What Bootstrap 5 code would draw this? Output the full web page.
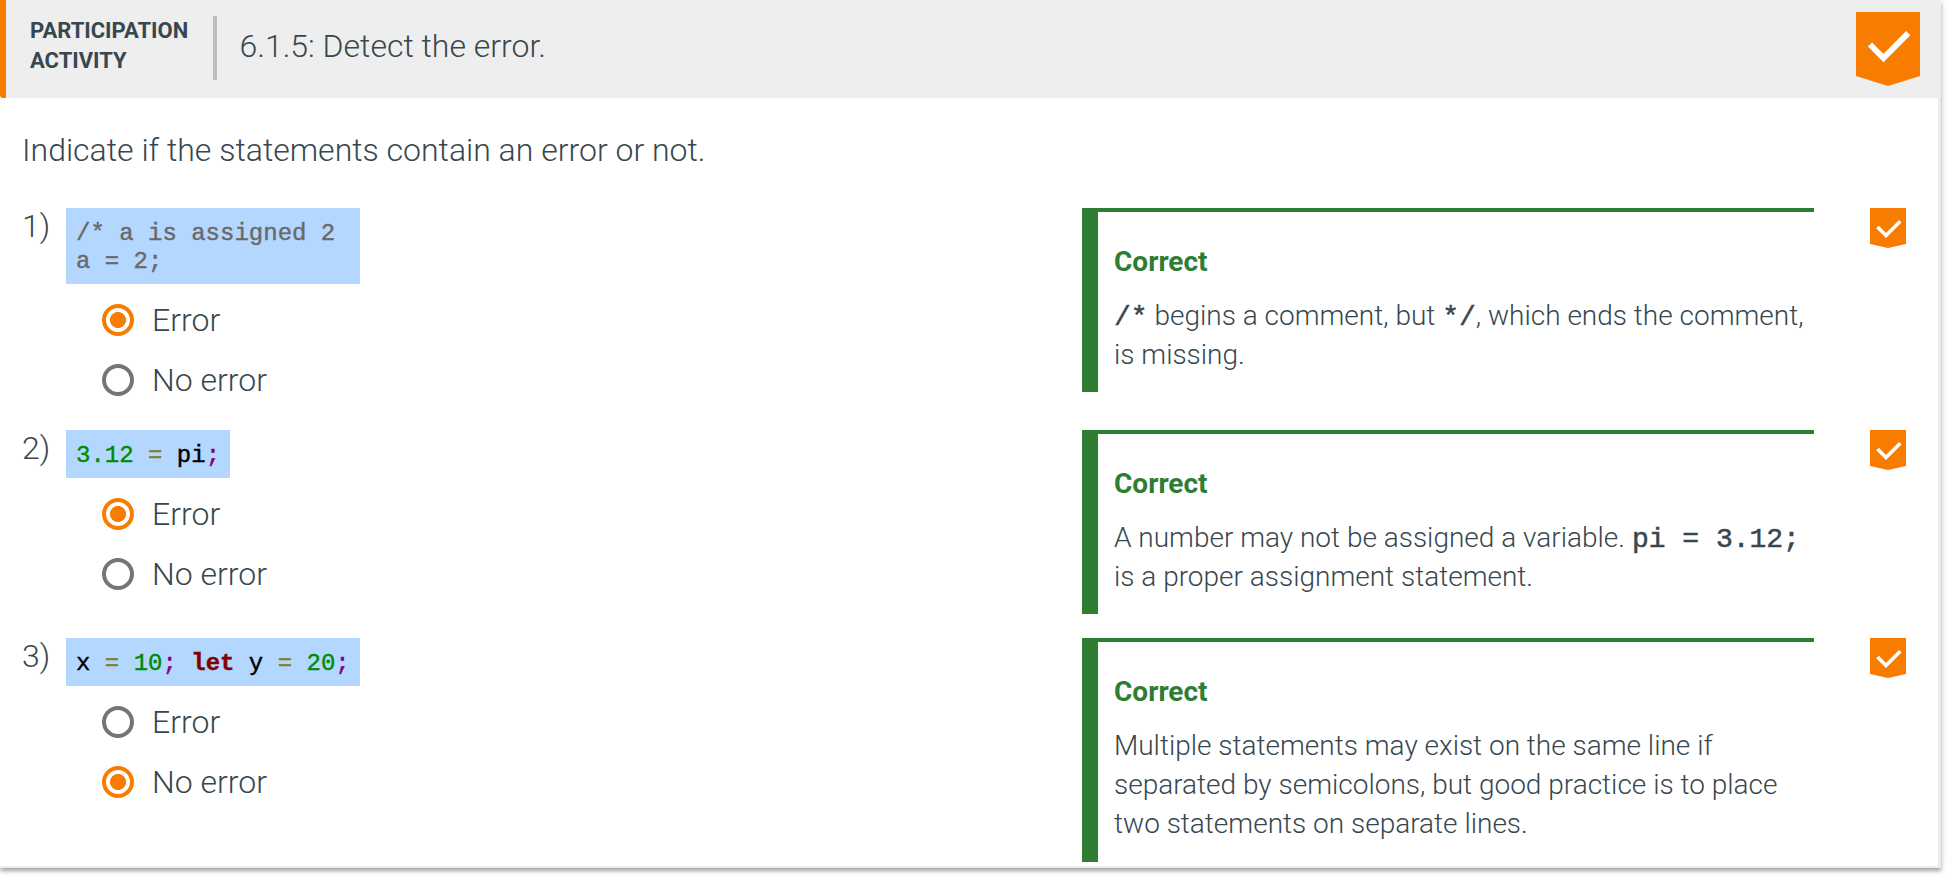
<!DOCTYPE html>
<html lang="en">
<head>
<meta charset="utf-8">
<meta name="viewport" content="width=device-width, initial-scale=1">
<title>6.1.5: Detect the error.</title>
<link href="https://cdn.jsdelivr.net/npm/bootstrap@5.3.0/dist/css/bootstrap.min.css" rel="stylesheet">
<style>
  body { font-family: Roboto, sans-serif; font-size: 32px; font-weight: 300; line-height: 44px; color: #37474f; background: #fff; height: 876px; overflow: hidden; }
  .activity { width: 1941px; height: 868px; border: solid #ececec; border-width: 0 3px 2px 0; box-shadow: 0 3px 4px rgba(0,0,0,.32), 0 1px 10px rgba(0,0,0,.08); }
  .activity-head { height: 98px; margin-right: -3px; background: #eee; border-left: 6px solid #f77c00; border-bottom-left-radius: 3px; padding: 12px 21px 0 24px; }
  .kind { width: 187px; height: 64px; margin-top: 4px; border-right: 4px solid #bdbdbd; font-size: 22px; font-weight: 700; line-height: 30px; }
  .activity-title { margin: 12px 0 0 22.5px; font-size: 32px; font-weight: 300; line-height: 44px; }
  .intro { margin: 30px 22px 36px; }
  .question { padding-left: 22px; }
  .num { width: 44px; flex: none; line-height: 36px; }
  .left-side { width: 1016px; flex: none; padding-bottom: 20px; }
  .snippet { font-family: "Liberation Mono", monospace; font-size: 24px; font-weight: 400; line-height: 28px; width: fit-content; padding: 12px 10px 8px; margin: 0 0 6px; background: #b3d7ff; color: #000; overflow: visible; -webkit-text-stroke: .4px currentColor; }
  .snippet-wide { width: 294px; }
  .cm { color: #696969; } .nm { color: #008b00; } .op { color: #808030; } .pn { color: #800080; } .kw { color: #800000; font-weight: 700; }
  .option { height: 60px; padding-left: 36px; gap: 18px; }
  .option .form-check-input { width: 32px; height: 32px; margin: 0; border: 4px solid #757575; background: #fff; flex: none; }
  .option .form-check-input:checked { border-color: #f77c00; background: radial-gradient(circle, #f77c00 7.6px, #fff 8.4px); background-origin: border-box; }
  .explain { width: 732px; flex: none; min-height: 184px; margin-bottom: 24px; border: solid #2e7d32; border-width: 4px 0 0 16px; padding: 30px 0 17px 16px; font-size: 28px; line-height: 39.2px; }
  .verdict { color: #2e7d32; font-weight: 700; margin-bottom: 14.8px; }
  .explain code { font-family: "Liberation Mono", monospace; font-size: 28px; line-height: 1; color: inherit; -webkit-text-stroke: .5px currentColor; }
  .mini { margin-left: 56px; flex: none; }
  .question:last-child .explain { margin-bottom: 0; height: 224px; padding-bottom: 0; }
</style>
</head>
<body>
<main class="activity">
  <header class="activity-head d-flex align-items-start">
    <div class="kind">PARTICIPATION<br>ACTIVITY</div>
    <h1 class="activity-title">6.1.5: Detect the error.</h1>
    <svg class="ms-auto" width="64" height="74" viewBox="0 0 64 74"><path fill="#f77c00" d="M0 0H64V64L32 74L0 64Z"/><path fill="none" stroke="#fff" stroke-width="6" d="M14 32.5L27.5 46L52.2 21.2"/></svg>
  </header>
  <p class="intro">Indicate if the statements contain an error or not.</p>

  <section class="question d-flex align-items-start">
    <div class="num">1)</div>
    <div class="left-side">
      <pre class="snippet snippet-wide cm">/* a is assigned 2
a = 2;</pre>
      <label class="option d-flex align-items-center"><input class="form-check-input" type="radio" name="q1" checked><span>Error</span></label>
      <label class="option d-flex align-items-center"><input class="form-check-input" type="radio" name="q1"><span>No error</span></label>
    </div>
    <div class="explain">
      <div class="verdict">Correct</div>
      <div><code>/*</code> begins a comment, but <code>*/</code>, which ends the comment, is missing.</div>
    </div>
    <svg class="mini" width="36" height="40" viewBox="0 0 36 40"><path fill="#f77c00" d="M0 0H36V36L18 40L0 36Z"/><path fill="none" stroke="#fff" stroke-width="3.6" d="M7.5 19L16 27.5L30.3 13.2"/></svg>
  </section>

  <section class="question d-flex align-items-start">
    <div class="num">2)</div>
    <div class="left-side">
      <pre class="snippet"><span class="nm">3.12</span> <span class="op">=</span> pi<span class="pn">;</span></pre>
      <label class="option d-flex align-items-center"><input class="form-check-input" type="radio" name="q2" checked><span>Error</span></label>
      <label class="option d-flex align-items-center"><input class="form-check-input" type="radio" name="q2"><span>No error</span></label>
    </div>
    <div class="explain">
      <div class="verdict">Correct</div>
      <div>A number may not be assigned a variable. <code>pi = 3.12;</code> is a proper assignment statement.</div>
    </div>
    <svg class="mini" width="36" height="40" viewBox="0 0 36 40"><path fill="#f77c00" d="M0 0H36V36L18 40L0 36Z"/><path fill="none" stroke="#fff" stroke-width="3.6" d="M7.5 19L16 27.5L30.3 13.2"/></svg>
  </section>

  <section class="question d-flex align-items-start">
    <div class="num">3)</div>
    <div class="left-side">
      <pre class="snippet">x <span class="op">=</span> <span class="nm">10</span><span class="pn">;</span> <span class="kw">let</span> y <span class="op">=</span> <span class="nm">20</span><span class="pn">;</span></pre>
      <label class="option d-flex align-items-center"><input class="form-check-input" type="radio" name="q3"><span>Error</span></label>
      <label class="option d-flex align-items-center"><input class="form-check-input" type="radio" name="q3" checked><span>No error</span></label>
    </div>
    <div class="explain">
      <div class="verdict">Correct</div>
      <div>Multiple statements may exist on the same line if separated by semicolons, but good practice is to place two statements on separate lines.</div>
    </div>
    <svg class="mini" width="36" height="40" viewBox="0 0 36 40"><path fill="#f77c00" d="M0 0H36V36L18 40L0 36Z"/><path fill="none" stroke="#fff" stroke-width="3.6" d="M7.5 19L16 27.5L30.3 13.2"/></svg>
  </section>
</main>
<script src="https://cdn.jsdelivr.net/npm/bootstrap@5.3.0/dist/js/bootstrap.bundle.min.js"></script>
</body>
</html>
